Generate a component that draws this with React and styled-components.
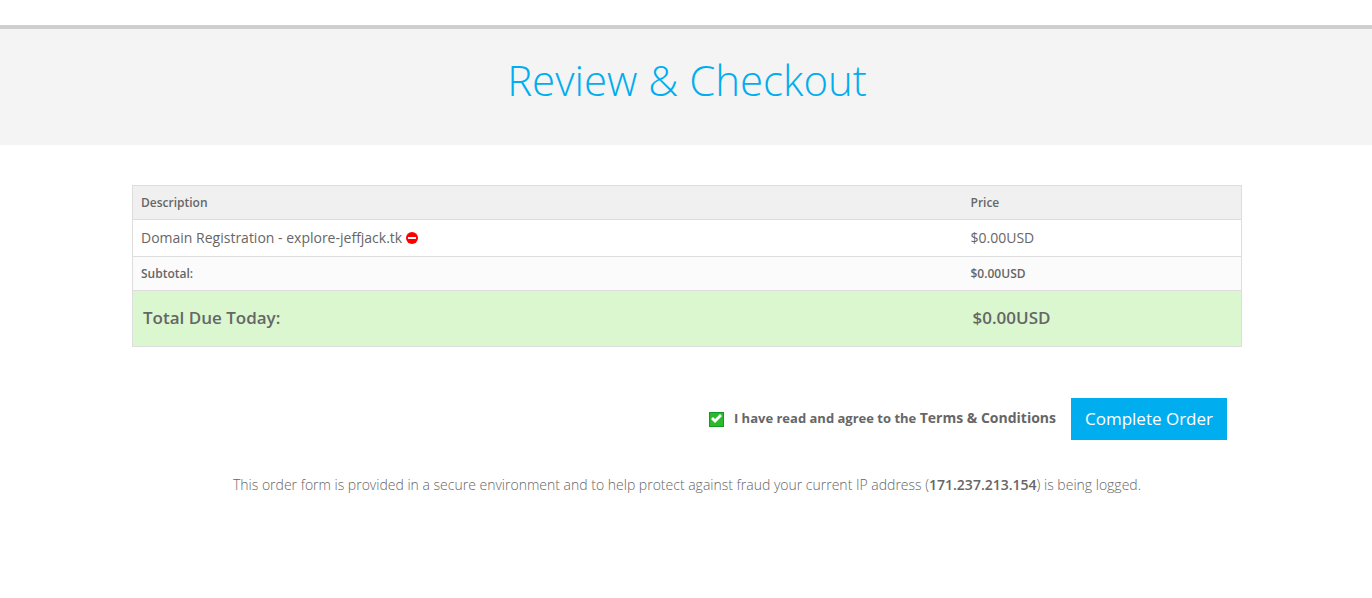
import React from 'react';
import styled, { createGlobalStyle } from 'styled-components';

const GlobalStyle = createGlobalStyle`
  *, *::before, *::after { box-sizing: border-box; }
  body {
    margin: 0;
    background: #fff;
    color: #666;
    font: 400 14px/20px 'Open Sans', sans-serif;
  }
`;

const TopBar = styled.div`
  height: 29px;
  border-bottom: 4px solid #cfcfcf;
`;

const Banner = styled.header`
  padding: 23px 16px 37px 18px;
  background: #f4f4f4;
  text-align: center;
`;

const Title = styled.h1`
  margin: 0;
  color: #00aeef;
  font-size: 42px;
  font-weight: 300;
  line-height: 56px;
`;

const Content = styled.main`
  max-width: 1144px;
  margin: 0 auto;
  padding: 40px 16px 40px 18px;
`;

const OrderTable = styled.table`
  width: 100%;
  table-layout: fixed;
  border: 1px solid #ddd;
  border-collapse: collapse;
  text-align: left;
`;

const HeadCell = styled.th`
  width: ${(p) => p.$width};
  padding: 7px 8px;
  background: #f0f0f0;
  font-size: 12px;
  font-weight: 600;
  line-height: 19px;
`;

const Row = styled.tr`
  border-top: 1px solid #ddd;
`;

const ItemCell = styled.td`
  padding: 8px;
`;

const SubtotalCell = styled.td`
  padding: 7px 8px;
  background: #fbfbfb;
  font-size: 12px;
  font-weight: 600;
  line-height: 19px;
`;

const TotalCell = styled.td`
  padding: 14px 10px 16px;
  background: #daf7d0;
  font-size: 17px;
  font-weight: 600;
  line-height: 25px;
`;

const RemoveButton = styled.button`
  margin: 0 0 0 4px;
  padding: 0;
  border: 0;
  background: none;
  vertical-align: -1px;
  line-height: 0;
  cursor: pointer;
`;

const Actions = styled.form`
  display: flex;
  align-items: center;
  justify-content: flex-end;
  margin-top: 51px;
  padding-right: 15px;
`;

const Agreement = styled.div`
  display: flex;
  align-items: center;
  padding-bottom: 2px;
`;

const CheckWrap = styled.span`
  display: grid;
  margin: 2px 10px 0 0;

  & > * {
    grid-area: 1 / 1;
  }

  & > svg {
    pointer-events: none;
  }

  & > input:not(:checked) + svg {
    visibility: hidden;
  }
`;

const Checkbox = styled.input`
  appearance: none;
  width: 15px;
  height: 15px;
  margin: 0;
  border: 1px solid #0f9a24;
  background: #fff;

  &:checked {
    background: #2db92d;
  }
`;

const AgreeLabel = styled.label`
  font-size: 13px;
  font-weight: 700;
`;

const TermsLink = styled.a`
  color: inherit;
  font-size: 14px;
  font-weight: 700;
  text-decoration: none;
`;

const SubmitButton = styled.button`
  height: 42px;
  margin-left: 15px;
  padding: 0 14px;
  border: 0;
  background: #00aeef;
  color: #fff;
  font: 400 17px/24px 'Open Sans', sans-serif;
  cursor: pointer;
`;

const Notice = styled.p`
  margin: 35px 0 0;
  font-weight: 300;
  text-align: center;

  strong {
    font-weight: 600;
  }
`;

export default function App() {
  return (
    <>
      <GlobalStyle />
      <TopBar />
      <Banner>
        <Title>Review &amp; Checkout</Title>
      </Banner>
      <Content>
        <OrderTable>
          <thead>
            <tr>
              <HeadCell scope="col" $width="auto">Description</HeadCell>
              <HeadCell scope="col" $width="279px">Price</HeadCell>
            </tr>
          </thead>
          <tbody>
            <Row>
              <ItemCell>
                Domain Registration - explore-jeffjack.tk
                <RemoveButton type="button" aria-label="Remove">
                  <svg width="12" height="12" viewBox="0 0 12 12">
                    <circle cx="6" cy="6" r="6" fill="#ff0000" />
                    <rect x="2" y="5" width="8" height="2" fill="#fff" />
                  </svg>
                </RemoveButton>
              </ItemCell>
              <ItemCell>$0.00USD</ItemCell>
            </Row>
            <Row>
              <SubtotalCell>Subtotal:</SubtotalCell>
              <SubtotalCell>$0.00USD</SubtotalCell>
            </Row>
            <Row>
              <TotalCell>Total Due Today:</TotalCell>
              <TotalCell>$0.00USD</TotalCell>
            </Row>
          </tbody>
        </OrderTable>
        <Actions onSubmit={(e) => e.preventDefault()}>
          <Agreement>
            <CheckWrap>
              <Checkbox id="agree" type="checkbox" defaultChecked />
              <svg width="15" height="15" viewBox="0 0 15 15">
                <path d="M2 7l2-2 2 2 5-5 2 2-7 7z" fill="#fff" />
              </svg>
            </CheckWrap>
            <AgreeLabel htmlFor="agree">
              I have read and agree to the <TermsLink href="#terms">Terms &amp; Conditions</TermsLink>
            </AgreeLabel>
          </Agreement>
          <SubmitButton type="submit">Complete Order</SubmitButton>
        </Actions>
        <Notice>
          This order form is provided in a secure environment and to help protect against fraud your
          current IP address (<strong>171.237.213.154</strong>) is being logged.
        </Notice>
      </Content>
    </>
  );
}
